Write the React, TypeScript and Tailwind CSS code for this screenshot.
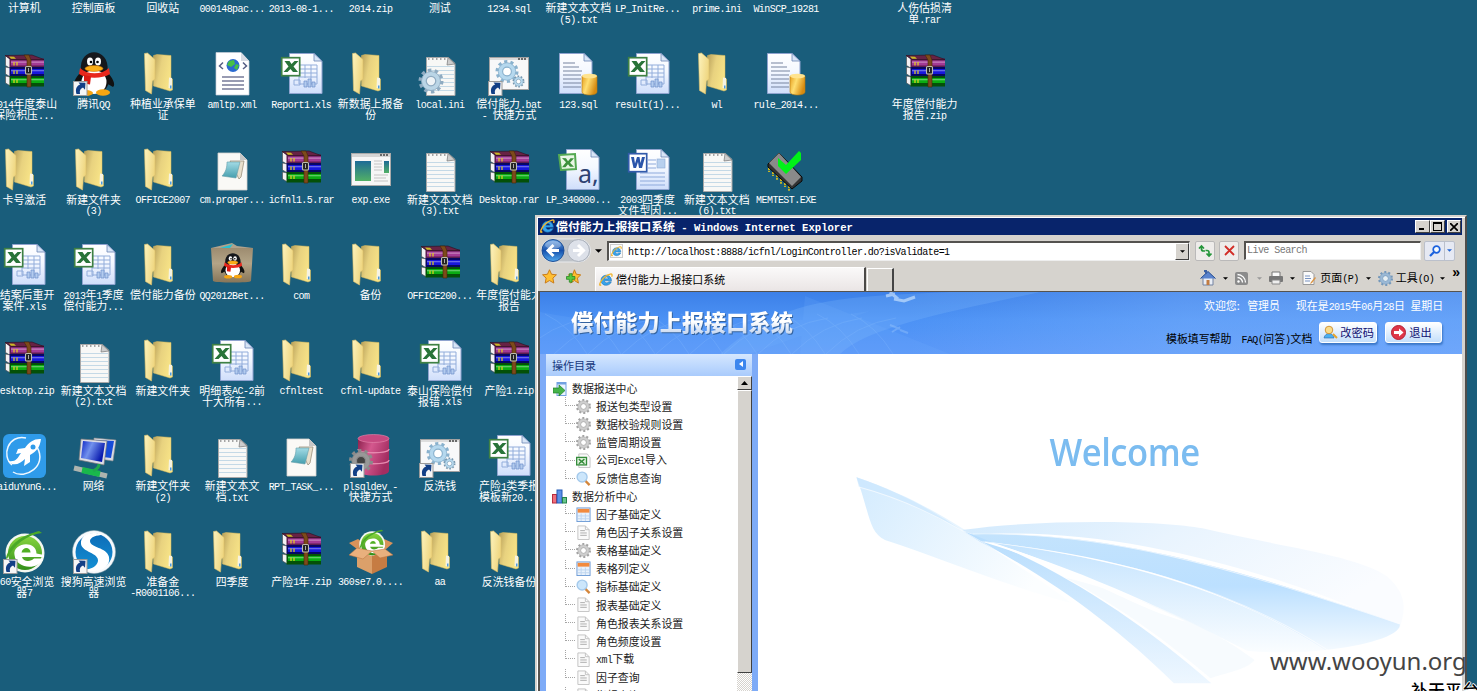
import React from "react";

type Kind =
  | "none" | "rar" | "qq" | "folder" | "xml" | "xls" | "ini" | "bat" | "batlink" | "sql" | "txt" | "prop"
  | "exe" | "csv" | "doc" | "mem" | "qqbox" | "baidu" | "net" | "plsql" | "se" | "sogou" | "sebox";

/* Mixed text: half-width Latin runs beside full-width Han characters. */
function T({ children }: { children: string }) {
  return (
    <>
      {children.split(/([\x20-\x7e]+)/).map((s, i) =>
        i % 2 ? (
          <span key={i} className="whitespace-pre font-['Liberation_Mono',monospace] text-[0.917em] tracking-[-0.055em]">{s}</span>
        ) : (
          <React.Fragment key={i}>{s}</React.Fragment>
        )
      )}
    </>
  );
}

function Gear({ cx, cy, r, fill, stroke, hole = "#fff" }: { cx: number; cy: number; r: number; fill: string; stroke: string; hole?: string }) {
  const c = 2 * Math.PI * r * 0.85;
  return (
    <g>
      <circle cx={cx} cy={cy} r={r * 0.85} fill="none" stroke={stroke} strokeWidth={r * 0.3} strokeDasharray={`${c / 20} ${c / 20}`} />
      <circle cx={cx} cy={cy} r={r * 0.76} fill={fill} stroke={stroke} strokeWidth={r * 0.07} />
      <circle cx={cx} cy={cy} r={r * 0.38} fill={hole} stroke={stroke} strokeWidth={r * 0.1} />
    </g>
  );
}

function Shortcut() {
  return (
    <g>
      <rect x="1.5" y="29.5" width="13.5" height="14" fill="#f6f6f6" stroke="#9a9a9a" />
      <path d="M4.500 42c-1.500-5 .3-8.500 3.700-9.500L6.500 30.500l7 .3-.5 7-2-2.200c-2.500.9-3.700 3-3 6.400z" fill="#123f86" />
    </g>
  );
}

function Penguin() {
  return (
    <g>
      <path d="M9 20C3 26 0 33 3 35l7-4zM35 20c6 6 9 13 6 15l-7-4z" fill="#111" />
      <ellipse cx="22" cy="28" rx="15" ry="14" fill="#111" />
      <ellipse cx="22" cy="30" rx="12.500" ry="12" fill="#fff" />
      <path d="M9 19C6-6 38-6 35.500 19z" fill="#16181c" />
      <ellipse cx="18" cy="9.500" rx="3" ry="4" fill="#fff" /><ellipse cx="26" cy="9.500" rx="3" ry="4" fill="#fff" />
      <circle cx="19" cy="10" r="1.300" /><circle cx="25.500" cy="10" r="1.300" />
      <path d="M8 16c7 7 22 7 29 0l1 6c-8 5-23 5-31 0z" fill="#e8281c" />
      <path d="M12 23l7 1.500-1 8-6-1z" fill="#d91a12" />
      <ellipse cx="22" cy="16.500" rx="9" ry="3" fill="#fbae17" stroke="#c86b00" strokeWidth=".5" />
      <ellipse cx="14" cy="41" rx="7" ry="3" fill="#f7a511" /><ellipse cx="31" cy="40.500" rx="7" ry="3.200" fill="#f7a511" />
    </g>
  );
}

function Page({ x = 10 }: { x?: number }) {
  return (
    <g transform={`translate(${x} 0)`}>
      <path d="M.5 1.500h24.500L33 9v32.500H.5z" fill="url(#paper)" stroke="#8fa3cf" strokeWidth="1" />
      <path d="M25 1.500V9h8z" fill="#d8e5f6" stroke="#6c87b5" strokeWidth=".8" />
    </g>
  );
}

function Pad() {
  return (
    <g>
      <path d="M8.500 5.500h22L37 11.500V43.500H8.500z" fill="#f8f8f6" stroke="#a8a8a8" />
      <path d="M30 5.500l-1 7.500 8-1z" fill="#cdcdcd" stroke="#777" strokeWidth=".7" />
      <path d="M10 7h19" stroke="#a5a5a5" strokeWidth="2" strokeDasharray="1.500 2.500" />
      <path d="M9 14.500h27M9 18.500h27M9 22.500h27M9 26.500h27M9 30.500h27M9 34.500h27M9 38.500h27" stroke="#c4d9e6" />
    </g>
  );
}

function ELogo() {
  return (
    <g>
      <circle cx="23" cy="23" r="19.500" fill="#f4f8f0" />
      <circle cx="23" cy="23" r="17" fill="url(#green)" />
      <path d="M12.500 25C10 13 34 9 34.500 23.500L42 25V27H20c1 5 9 5 12 1.500h9C36 41 14 39 12.500 25z" fill="#fff" />
      <path d="M19.500 22.500h9c0-6-8-6-9 0z" fill="#51af24" />
      <path d="M4 28C8 12 22 5 37 1l3 2C25 5 12 14 5 29z" fill="#4ba928" />
    </g>
  );
}

function Icon({ kind }: { kind: Kind }) {
  let body: React.ReactNode = null;
  switch (kind) {
    case "folder":
      body = (
        <g>
          <path d="M12.500 3.500L16 2.500l14 1V26l1.500 1v11L29 39 12.500 34z" fill="url(#folderBack)" stroke="#d8bb5d" strokeWidth=".5" />
          <path d="M3.500 1.500l3-.5L14 7.500V27l-2.500 2-1 13L4.500 38.500z" fill="url(#folderFront)" stroke="#dbc06a" strokeWidth=".6" />
          <path d="M28 25.500l3 .5v10.500l-3.500-.5z" fill="#f6f3e2" /><path d="M29 33.500h1.500v3H29z" fill="#4c9be0" />
        </g>
      );
      break;
    case "rar":
      body = (
        <g>
          {[["#a33a95", "#5d1c50", 3.5], ["#1717dc", "#070763", 15], ["#0aac12", "#045008", 24]].map(([a, b, y], i) => (
            <g key={i}>
              <path d={`M3.500 ${y}l5 ${i ? 1 : 4}v9l-5-3z`} fill="#f3f1f3" stroke="#444" strokeWidth=".6" />
              <rect x="7.500" y={Number(y) + (i ? 0 : 3)} width="34.500" height={i ? 10.5 : 9} fill={String(b)} />
              <rect x="9" y={Number(y) + (i ? 2 : 5)} width="33" height="5" fill={String(a)} />
              <rect x="9" y={Number(y) + (i ? 3 : 6)} width="33" height="1.300" fill="#fff" opacity=".35" />
              <path d={`M12 ${Number(y) + (i ? 3.5 : 6.5)}v3.500m3-3.500v3.500`} stroke="#e6d21b" strokeWidth="1.200" />
            </g>
          ))}
          <path d="M3 3.500l27-.5 12 4.500H9z" fill="#672244" stroke="#2c0e1d" strokeWidth=".6" />
          <path d="M7 4.500l5 .2 2 2H9z" fill="#c9ba25" />
          <path d="M22 3h5l2 5v27h-4V8z" fill="#7d4a1b" stroke="#462608" strokeWidth=".6" />
          <rect x="23.500" y="14.500" width="6" height="7.500" rx="1" fill="#222" stroke="#bdbdb0" strokeWidth="1.100" /><path d="M26.500 16v4" stroke="#aaa" />
        </g>
      );
      break;
    case "qq":
      body = <g><Penguin /><Shortcut /></g>;
      break;
    case "xml":
      body = (
        <g>
          <path d="M6 .5h25L39 9v34H6z" fill="#fff" stroke="#c7cdd8" strokeWidth=".7" /><path d="M31 .5V9h8z" fill="#d7dbe3" />
          <circle cx="23" cy="13.500" r="6.500" fill="#2b6ad0" /><path d="M19 9l5-1 1 4-4 3-4-2zM26 12l3 1-2 5-3-2z" fill="#46c046" />
          <path d="M13 10.500L9.500 14l3.500 3M33 10.500l3.500 3.500L33 17" fill="none" stroke="#565f86" strokeWidth="1.500" />
          <path d="M12 25h22M12 29h22M12 33h22M12 37h22" stroke="#777b99" strokeWidth="1.400" />
        </g>
      );
      break;
    case "xls":
      body = (
        <g>
          <Page />
          <path d="M20 13h18v19H20zM20 17h18M20 21h18M20 25h18M26 13v13M32 13v19M15 28h6v5h-6z" fill="none" stroke="#92addb" />
          <path d="M25 35v-6h3v6zm4 0v-8h3v8zm4 0v-5h3v5z" fill="#b3cbee" stroke="#6e91ca" strokeWidth=".7" />
          <rect x="2.700" y="5.700" width="18" height="18" fill="#fff" stroke="#3f8144" strokeWidth="1.700" />
          <path d="M5.500 9h5l2 3 3-3h4l-5 5.500 4.500 5.500h-5l-2.500-3-3 3h-4l5-5.500z" fill="#297439" />
        </g>
      );
      break;
    case "csv":
      body = (
        <g>
          <Page /><path d="M3 7l16-1 1 15-15 1z" fill="#e9f7e5" stroke="#54a952" strokeWidth="2" />
          <path d="M6 10l4 .3 2 3 2.500-3H18l-4 4.500 4 4h-4l-2-2.500-2.500 3H6l4-5z" fill="#3d913c" />
          <text x="22" y="35" fontFamily="Noto Sans" fontSize="25" fill="#2d4272">a,</text>
        </g>
      );
      break;
    case "doc":
      body = (
        <g>
          <Page /><path d="M22 12h8M22 16h8M22 20h8M14 25h25M14 29h25M14 33h25M14 37h25" stroke="#8eaadb" strokeWidth="1.200" />
          <rect x="31" y="11" width="8" height="9" fill="#b8d0ee" stroke="#8ba9d4" strokeWidth=".6" />
          <rect x="2.700" y="5.700" width="18" height="18" fill="#fff" stroke="#335bab" strokeWidth="1.700" />
          <path d="M5 9l2.500 11h2.500l2-6 1 6h3L19 9h-3l-1.500 6L13.500 9h-2.500L9 15.500 8 9z" fill="#2b55aa" />
        </g>
      );
      break;
    case "txt":
      body = <Pad />;
      break;
    case "ini":
      body = <g><Pad /><Gear cx={13} cy={29} r={12.5} fill="#bad5e6" stroke="#8fabc1" hole="#eef3f6" /></g>;
      break;
    case "bat":
    case "batlink":
      body = (
        <g>
          <rect x="2.500" y="5.500" width="39" height="32" fill="#f8f8f9" stroke="#a1a1a1" /><path d="M3 7h38" stroke="#ddd" strokeWidth="2" /><path d="M31 7h8" stroke="#444" strokeWidth="1.300" strokeDasharray="2 1" />
          <Gear cx={20} cy={19.500} r={11.500} fill="#b5d8ee" stroke="#89b1cd" /><Gear cx={31.500} cy={29.500} r={6} fill="#b5d8ee" stroke="#7798b0" />
          <Shortcut />
        </g>
      );
      break;
    case "sql":
      body = (
        <g>
          <Page x={3} /><path d="M7 11h12M7 15h16M7 19h19M7 23h18M7 27h18M7 31h18M7 35h18" stroke="#7784a0" strokeWidth="1.200" />
          <path d="M26 24v16c0 4 15 4 15 0V24z" fill="url(#gold)" stroke="#b67b11" strokeWidth=".6" /><ellipse cx="33.500" cy="24" rx="7.500" ry="2.300" fill="#ffe38e" />
        </g>
      );
      break;
    case "prop":
      body = (
        <g>
          <path d="M8 5h22l7 7v30H8z" fill="#faf9f6" stroke="#d5d3cf" strokeWidth=".8" /><path d="M30 5v7h7z" fill="#c6c6c6" />
          <path d="M20 13h14l-3 16-2 2z" fill="#e8dfcc" stroke="#9a917e" strokeWidth=".8" /><path d="M17 14h13l-4 16-14-2c4-4 5-9 5-14z" fill="url(#teal)" stroke="#659eaa" strokeWidth=".6" />
        </g>
      );
      break;
    case "exe":
      body = (
        <g>
          <rect x="2.500" y="5.500" width="39" height="32" fill="#f6f6f6" stroke="#aaa" /><path d="M3 7.500h38" stroke="#d5d5d5" strokeWidth="3" /><path d="M31 7h8" stroke="#444" strokeWidth="1.300" strokeDasharray="2 1" />
          <rect x="6" y="13" width="16" height="20" fill="url(#screen)" /><rect x="35" y="13" width="5" height="12" fill="url(#screen)" />
          <path d="M25 13h8M25 16h8M25 19h8M25 22h8M25 27h14M25 30h12M25 33h14" stroke="#c4c4c4" />
        </g>
      );
      break;
    case "mem":
      body = (
        <g>
          <path d="M5 20v4m4 0v4m4-1v5m4-1v5m4-1v4m4-1v5" stroke="#c8b425" strokeWidth="2" strokeDasharray="2 .7" />
          <path d="M4 16L15 5l23 24v4L28 41 4 19z" fill="#333" stroke="#080808" /><path d="M5 15L15 5l22 24-9 9z" fill="#8a8a8a" />
          <path d="M14 10l8 7L35 3l2 2v7L22 26l-8-8z" fill="#00f218" />
        </g>
      );
      break;
    case "qqbox":
      body = (
        <g>
          <path d="M1 5l21-5 5 3 16 2-5 3z" fill="#b0a28c" /><path d="M10 5l13-4-3 4 7 1z" fill="#29c0d0" />
          <path d="M1 5h42l-2 33c0 2-37 2-38 0z" fill="url(#box)" /><g transform="translate(10 10) scale(.58)"><Penguin /></g>
        </g>
      );
      break;
    case "baidu":
      body = (
        <g>
          <rect x="1" width="43" height="44" rx="6" fill="#2f9bea" /><path d="M24 4C6 0-1 22 10 31m25-18c11 19-12 33-24 25" fill="none" stroke="#eff8ff" strokeWidth="1.500" />
          <path d="M39 5c-7-.5-12 3-16 9l-7 1-2 5 5-1c-4 6-5 9-13 8 5 6 12 3 17-2l-1 7 6-4v-7c7-4 10-8 11-16z" fill="#fff" /><circle cx="31" cy="13" r="2.500" fill="#2f9bea" />
        </g>
      );
      break;
    case "net":
      body = (
        <g>
          <path d="M22 4l22 2-3 21-20-3z" fill="#d8dae3" stroke="#888" strokeWidth=".6" /><path d="M24 6l18 1-3 17-16-2z" fill="#164bd8" />
          <path d="M9 5l26 2-3 24-25-5z" fill="#dddde5" stroke="#777" strokeWidth=".7" /><path d="M11 7l22 2-3 19-21-4z" fill="url(#monitor)" />
          <path d="M2 34l33 8" stroke="#aeb4af" strokeWidth="5" /><path d="M10 36l18 4" stroke="#19b84b" strokeWidth="6" /><path d="M27 30c0 5-3 5-6 7" fill="none" stroke="#1ea84b" strokeWidth="3" />
        </g>
      );
      break;
    case "plsql":
      body = (
        <g>
          <path d="M9 4v33c0 6 31 6 31 0V4z" fill="url(#pink)" /><ellipse cx="24.500" cy="4.500" rx="15.500" ry="4" fill="#c64980" stroke="#e58aae" strokeWidth=".6" />
          <path d="M9 15c0 5 31 5 31 0M9 26c0 5 31 5 31 0" fill="none" stroke="#e689af" strokeWidth="1.300" /><Gear cx={12} cy={27} r={12} fill="#989898" stroke="#8a8a8a" hole="#444" /><Shortcut />
        </g>
      );
      break;
    case "se":
      body = <g><ELogo /><Shortcut /></g>;
      break;
    case "sogou":
      body = (
        <g>
          <circle cx="22" cy="22" r="21.500" fill="#f7fafc" stroke="#97abb5" strokeWidth=".5" /><circle cx="22" cy="22" r="18.500" fill="url(#blue)" />
          <path d="M31 5C19 0 8 5 9 14c1 8 18 9 17 17-1 6-8 8-13 9 15 4 26-3 24-13C35 17 18 18 18 11c0-4 7-6 13-6z" fill="#fff" /><Shortcut />
        </g>
      );
      break;
    case "sebox":
      body = (
        <g>
          <path d="M9 9L0 13l8 6 15 3 13-2 8-7-9-4-12 10z" fill="#d8925a" /><g transform="translate(8 -1) scale(.66)"><ELogo /></g>
          <path d="M8 21l15 5v18L8 37z" fill="#dba06a" /><path d="M23 26l15-5v16l-15 7z" fill="#c67c43" /><path d="M8 18L0 25l14 4 9-8 8 7 13-3-8-6-13 2z" fill="#e9b07d" stroke="#ba713c" strokeWidth=".5" />
        </g>
      );
      break;
  }
  return <svg className="size-11 shrink-0 overflow-visible" viewBox="0 0 44 44">{body}</svg>;
}

type Item = [Kind, string, string?] | null;
const items: Item[] = [
  ["none", "计算机"], ["none", "控制面板"], ["none", "回收站"], ["none", "000148pac..."], ["none", "2013-08-1..."], ["none", "2014.zip"], ["none", "测试"], ["none", "1234.sql"], ["none", "新建文本文档", "(5).txt"], ["none", "LP_InitRe..."], ["none", "prime.ini"], ["none", "WinSCP_19281"], null, ["none", "人伤估损清", "单.rar"],
  ["rar", "2014年度泰山", "保险积压..."], ["qq", "腾讯QQ"], ["folder", "种植业承保单", "证"], ["xml", "amltp.xml"], ["xls", "Report1.xls"], ["folder", "新数据上报备", "份"], ["ini", "local.ini"], ["bat", "偿付能力.bat", "- 快捷方式"], ["sql", "123.sql"], ["xls", "result(1)..."], ["folder", "wl"], ["sql", "rule_2014..."], null, ["rar", "年度偿付能力", "报告.zip"],
  ["folder", "卡号激活"], ["folder", "新建文件夹", "(3)"], ["folder", "OFFICE2007"], ["prop", "cm.proper..."], ["rar", "icfnl1.5.rar"], ["exe", "exp.exe"], ["txt", "新建文本文档", "(3).txt"], ["rar", "Desktop.rar"], ["csv", "LP_340000..."], ["doc", "2003四季度", "文件型因..."], ["txt", "新建文本文档", "(6).txt"], ["mem", "MEMTEST.EXE"], null, null,
  ["xls", " 结案后重开", "案件.xls"], ["xls", "2013年1季度", "偿付能力..."], ["folder", "偿付能力备份"], ["qqbox", "QQ2012Bet..."], ["folder", "com"], ["folder", "备份"], ["rar", "OFFICE200..."], ["folder", "年度偿付能力", "报告"], null, null, null, null, null, null,
  ["rar", "Desktop.zip"], ["txt", "新建文本文档", "(2).txt"], ["folder", "新建文件夹"], ["xls", "明细表AC-2前", "十大所有..."], ["folder", "cfnltest"], ["folder", "cfnl-update"], ["xls", "泰山保险偿付", "报错.xls"], ["rar", "产险1.zip"], null, null, null, null, null, null,
  ["baidu", "BaiduYunG..."], ["net", "网络"], ["folder", "新建文件夹", "(2)"], ["txt", "新建文本文", "档.txt"], ["prop", "RPT_TASK_..."], ["plsql", "plsqldev -", "快捷方式"], ["batlink", "反洗钱"], ["xls", "产险1类季报", "模板新20..."], null, null, null, null, null, null,
  ["se", "360安全浏览", "器7"], ["sogou", "搜狗高速浏览", "器"], ["folder", "准备金", "-R0001106..."], ["folder", "四季度"], ["rar", "产险1年.zip"], ["sebox", "360se7.0...."], ["folder", "aa"], ["folder", "反洗钱备份"], null, null, null, null, null, null,
];

type TreeIcon = "gear" | "xl" | "find" | "table" | "page";
const group1: [TreeIcon, string][] = [["gear", "报送包类型设置"], ["gear", "数据校验规则设置"], ["gear", "监管周期设置"], ["xl", "公司Excel导入"], ["find", "反馈信息查询"]];
const group2: [TreeIcon, string][] = [["table", "因子基础定义"], ["page", "角色因子关系设置"], ["gear", "表格基础定义"], ["table", "表格列定义"], ["find", "指标基础定义"], ["page", "报表基础定义"], ["page", "角色报表关系设置"], ["page", "角色频度设置"], ["page", "xml下载"], ["page", "因子查询"], ["page", "指标查询"]];

function SmallIcon({ kind }: { kind: TreeIcon }) {
  return (
    <svg className="size-[15px] shrink-0" viewBox="0 0 16 16">
      {kind === "gear" && <Gear cx={8} cy={8} r={8} fill="#cfcfcf" stroke="#a2a2a2" />}
      {kind === "page" && <g><path d="M2 1h8l4 4v10.500H2z" fill="#fafafa" stroke="#c2c2c2" /><path d="M10 1v4h4" fill="none" stroke="#c2c2c2" /><path d="M4.500 6h5M4.500 8.500h7M4.500 11h7" stroke="#aaa" /></g>}
      {kind === "xl" && <g><path d="M3 1h9l3 4v10.500H3z" fill="#fafafa" stroke="#c2c2c2" /><rect x=".7" y="4.700" width="10.500" height="8" fill="#e2f2de" stroke="#348c3b" strokeWidth="1.400" /><path d="M3 6.500l6 5M9 6.500l-6 5" stroke="#348c3b" strokeWidth="1.500" /></g>}
      {kind === "find" && <g><path d="M9.500 10l5 5" stroke="#d4863b" strokeWidth="2.500" /><circle cx="6.500" cy="6.500" r="5.300" fill="#cce6fb" stroke="#a5caec" strokeWidth="1.500" /></g>}
      {kind === "table" && <g><rect x="1" y="1" width="14" height="14.500" fill="#e9f2fc" stroke="#6c9bd6" /><rect x="1.800" y="2" width="12.500" height="4" fill="#f28a3d" /><path d="M2 9.500h12M2 12.500h12M5.500 7v8M10 7v8" stroke="#bed5ef" /></g>}
    </svg>
  );
}

function Branch({ icon, label }: { icon: TreeIcon; label: string }) {
  return (
    <div className="flex h-[18.2px] shrink-0 items-center pl-[19px]">
      <div className="h-full w-[11px] shrink-0"><div className="h-[9px] w-[10px] border-b border-l border-dotted border-[#a5a5a5]" /></div>
      <SmallIcon kind={icon} />
      <span className="ml-[5px] whitespace-nowrap"><T>{label}</T></span>
    </div>
  );
}

function IE({ className }: { className: string }) {
  return (
    <svg className={className} viewBox="0 0 16 16">
      <path d="M2.300 9C1.700 1 14-.2 14.300 8.900H6.300c.4 3 3.800 2.800 4.700 1.200h3.100C12.300 15.500 3 15.600 2.300 9zm4-2.300h4.400c-.2-2.700-4-2.600-4.400 0z" fill="#36a3ec" stroke="#1767ac" strokeWidth=".6" />
      <path d="M2.500 13.500C-2 17 2.500 4 13 1.200c2.500-.6 2 1.800 1.500 3" fill="none" stroke="#f0b52d" strokeWidth="1.500" />
    </svg>
  );
}

function Down({ className = "" }: { className?: string }) {
  return <svg className={`h-[3px] w-[5px] shrink-0 ${className}`} viewBox="0 0 6 3"><path d="M0 0h6L3 3z" fill="currentColor" /></svg>;
}

function Banner() {
  return (
    <svg className="absolute inset-0 size-full" viewBox="0 0 922 62" preserveAspectRatio="none">
      <rect width="922" height="62" fill="url(#banner)" />
      <rect width="922" height="62" fill="url(#bannerRight)" />
      <g fill="none" stroke="#a5cfff" opacity=".18">
        {[0, 1, 2, 3, 4, 5, 6, 7, 8, 9].map((n) => <path key={n} d={`M${n * 34 - 20} 62q30-30 70-36M${n * 34 + 5} 22q25 12 42 40`} />)}
      </g>
      <path d="M180 62C240 8 290 5 410 0h90C410 20 330 34 300 62z" fill="#91c6ff" opacity=".2" />
      <path d="M265 4L410 62H260zM0 20Q140 48 330 19L210 62H0z" fill="#79b7ff" opacity=".15" />
      <path d="M346 4l9-2M350 0l8 7M354 7l10 2 11-4" fill="none" stroke="#d9edff" strokeWidth="3" opacity=".6" />
      <path d="M350 33l10 4m-8 3l8-5m0 3l8 3" stroke="#b2d7ff" strokeWidth="2" opacity=".3" />
    </svg>
  );
}

function Swoosh() {
  return (
    <svg className="absolute inset-0 size-full" viewBox="-202 -138 1730 1011" preserveAspectRatio="none">
      <path d="M40 232C180 290 285 370 350 425S500 545 570 610C400 555 260 480 110 420C70 395 75 350 40 232z" fill="url(#sw1)" />
      <path d="M40 232C150 278 245 345 300 392C230 345 120 282 46 261z" fill="#c9e6fd" opacity=".6" />
      <path d="M298 390C500 355 800 362 890 385C1080 440 1270 465 1345 530C1400 590 1385 640 1375 685C1150 550 700 370 330 405z" fill="url(#sw2)" />
      <path d="M320 402C640 395 930 485 1375 672C1380 705 1290 738 1190 750C950 560 690 470 355 425z" fill="url(#sw3)" />
      <path d="M355 425C660 470 960 565 1190 750C1110 762 1040 757 1000 752C860 665 620 520 380 432z" fill="url(#sw4)" />
      <path d="M545 530C740 590 900 670 1018 780C1000 810 940 820 910 835C810 730 680 610 520 512z" fill="#f1f8fe" opacity=".6" />
      <path d="M300 392C520 488 730 655 912 850H820C680 680 510 530 345 426z" fill="url(#sw5)" />
      <path d="M46 261C150 295 240 350 300 392S470 508 570 610M325 402C650 395 940 495 1375 672M355 425C680 475 940 550 1198 750" fill="none" stroke="#fff" strokeWidth="2.500" opacity=".65" />
      <path d="M345 424C620 525 710 620 850 665C720 590 540 495 380 430z" fill="#fff" />
    </svg>
  );
}

function Defs() {
  const g = (id: string, a: string, b: string, v = false, mid?: string) => (
    <linearGradient id={id} x1="0" y1="0" x2={v ? 0 : 1} y2={v ? 1 : 0.4}>
      <stop stopColor={a} />{mid && <stop offset=".45" stopColor={mid} />}<stop offset="1" stopColor={b} />
    </linearGradient>
  );
  return (
    <svg className="absolute size-0">
      <defs>
        <linearGradient id="bannerRight">
          <stop offset=".4" stopColor="#8cbcff" stopOpacity="0" /><stop offset=".7" stopColor="#8cbcff" stopOpacity=".35" /><stop offset="1" stopColor="#8cbcff" stopOpacity=".4" />
        </linearGradient>
        {g("folderBack", "#b8a05a", "#f8e487", false, "#e8d27f")}{g("folderFront", "#fdf3bd", "#efd680")}
        {g("paper", "#fff", "#cfdefb", true, "#f4f8ff")}{g("gold", "#e59d1c", "#d68a10", false, "#ffdf72")}
        {g("teal", "#a3dbe5", "#459ead", true)}{g("screen", "#1d6b96", "#52b066", true)}{g("box", "#9d8c70", "#887659", true, "#b3a487")}
        {g("monitor", "#0b25c6", "#0718ad", false, "#7291ed")}{g("pink", "#8a204c", "#a32d61", false, "#d4588e")}
        {g("green", "#87d43e", "#328f1a", true)}{g("blue", "#0c6cb7", "#1490d4", true)}{g("banner", "#3c80e8", "#5b98f8", true, "#4c92f5")}
        {g("sw1", "#d3ebfe", "#fcfeff")}{g("sw2", "#d3eafd", "#fafcff", false, "#e9f4fe")}{g("sw3", "#c3e3fd", "#f4faff", true, "#bce0ff")}
        {g("sw4", "#c3e3fe", "#fafdff", true)}{g("sw5", "#b5dcfd", "#eef7ff", true)}
      </defs>
    </svg>
  );
}

const bevel = "border border-t-white border-l-white border-r-[#404040] border-b-[#404040] bg-[#d6d3ce]";

function BrowserWindow() {
  return (
    <div className="absolute left-[535px] top-[215px] flex h-[500px] w-[932px] flex-col border-2 border-[#d6d3ce] border-r-[#4f4d4a] bg-[#d6d3ce] pl-px pr-[3px] pt-px shadow-[inset_1px_1px_0_#fff]">
      <div className="flex h-[17px] shrink-0 items-center bg-[#08246b] pl-[2px] pr-px text-[12.1px] font-bold text-white">
        <IE className="mr-px size-[15px]" />
        <div className="flex-1 whitespace-nowrap text-[11.900px] leading-none">偿付能力上报接口系统<span className="whitespace-pre font-['Liberation_Mono',monospace] text-[10.600px]"> - Windows Internet Explorer</span></div>
        <div className={`flex h-[13px] w-[15px] items-end pb-[2px] pl-[3px] ${bevel}`}><i className="h-[2px] w-[5px] bg-black" /></div>
        <div className={`flex h-[13px] w-[15px] items-center justify-center ${bevel}`}><i className="h-[9px] w-[9px] border border-t-2 border-black" /></div>
        <div className={`ml-[2px] flex h-[13px] w-[14px] items-center justify-center ${bevel}`}><svg className="size-[8px]" viewBox="0 0 8 8"><path d="M0 0l8 8M8 0L0 8" stroke="#000" strokeWidth="1.700" /></svg></div>
      </div>

      <div className="flex h-[31px] shrink-0 items-center pl-[3px] pr-[7px]">
        <svg className="h-[25px] w-[50px] shrink-0" viewBox="0 0 50 25">
          <rect x=".5" y="1" width="49" height="23" rx="11.500" fill="#bfc3c8" stroke="#e8eaed" />
          <circle cx="12" cy="12.500" r="11" fill="url(#nav)" stroke="#1e4f96" /><circle cx="37.500" cy="12.500" r="11" fill="#dde1e9" stroke="#aab0ba" />
          <ellipse cx="12" cy="7" rx="8" ry="4" fill="#fff" opacity=".3" />
          <path d="M12.500 7L7 12.500l5.500 5.500M7.500 12.500H18M37 7l5.500 5.500L37 18M42 12.500H32" fill="none" stroke="#fff" strokeWidth="3" />
          <defs><linearGradient id="nav" x2="0" y2="1"><stop stopColor="#72a9e6" /><stop offset=".5" stopColor="#1550ac" /><stop offset="1" stopColor="#52a9ee" /></linearGradient></defs>
        </svg>
        <Down className="ml-[4px] h-[4px] w-[7px]" />
        <div className="ml-[5px] flex h-[20px] w-[583px] shrink-0 items-center border border-t-2 border-l-2 border-[#eee] border-t-[#54524f] border-l-[#54524f] bg-white pl-[1px] text-[10.920px]">
          <span className="mr-[5px] flex h-[14px] w-[13px] items-center border border-[#ccc] bg-[#fafafa]"><IE className="size-[11px]" /></span>
          <div className="flex-1 whitespace-nowrap tracking-[0.02px]"><T>http://localhost:8888/icfnl/LoginController.do?isValidate=1</T></div>
          <div className={`flex h-[17px] w-[14px] items-center justify-center ${bevel}`}><Down /></div>
        </div>
        <div className="ml-[5px] flex size-[20px] shrink-0 items-center justify-center rounded-[2px] border border-[#bab9b9] bg-[#eeecea]"><svg className="size-[14px]" viewBox="0 0 14 14"><path d="M3.500 2v3a2 2 0 002 2H7M1 4.500L3.500 2 6 4.500" fill="none" stroke="#25963b" strokeWidth="1.700" /><path d="M7.500 6.500H9a2 2 0 012 2V12M8.500 9.500L11 12l2.500-2.500" fill="none" stroke="#25963b" strokeWidth="1.700" /></svg></div>
        <div className="ml-[4px] flex size-[20px] shrink-0 items-center justify-center rounded-[2px] border border-[#bab9b9] bg-[#eeecea]"><svg className="size-[11px]" viewBox="0 0 11 11"><path d="M1 1l9 9M10 1l-9 9" stroke="#d22d27" strokeWidth="1.800" /></svg></div>
        <div className="ml-[5px] flex h-[19px] w-[177px] shrink-0 items-center border border-t-2 border-l-2 border-[#eee] border-t-[#54524f] border-l-[#54524f] bg-white pl-[1px] text-[10.920px] leading-none text-[#777]"><T>Live Search</T></div>
        <div className="ml-auto flex h-[20px] w-[31px] shrink-0 items-center rounded-[2px] border border-[#bbc0cb] bg-[#e6e9f3]">
          <svg className="ml-[4px] size-[12px]" viewBox="0 0 12 12"><circle cx="7.500" cy="4.500" r="3.300" fill="#f8fcff" stroke="#1c62de" strokeWidth="1.700" /><path d="M5 7l-4 4" stroke="#1c62de" strokeWidth="2.200" /></svg>
          <div className="ml-[3px] flex h-full flex-1 items-center justify-center border-l border-[#bbc0cb] text-[#2466d4]"><Down /></div>
        </div>
      </div>

      <div className="flex h-[25px] shrink-0 items-end">
        <svg className="mb-[7px] ml-[4px] size-[15px]" viewBox="0 0 16 16"><path d="M8 .8l2.200 4.800 5.200.6-3.800 3.500 1 5.300L8 12.300 3.400 15l1-5.300L.6 6.200l5.200-.6z" fill="#ffbf32" stroke="#c87813" /></svg>
        <svg className="mb-[7px] ml-[9px] size-[15px]" viewBox="0 0 16 16"><path d="M9 .8l2 4.800 4.700.6-3.500 3.500 1 5.300L9 12.300 5 15l1-5.300L2.600 6.200l4.600-.6z" fill="#ffbf32" stroke="#c87813" /><path d="M3.500 5h3v3h3v3h-3v3h-3v-3h-3V8h3z" fill="#57c940" stroke="#268021" strokeWidth=".8" /></svg>
        <div className="ml-[14px] flex h-[24px] w-[271px] items-center border-l border-r-2 border-t border-white border-r-[#4b4947] bg-gradient-to-b from-[#faf9f9] to-[#eae5e5] pl-[3px] text-[10.920px] leading-none"><IE className="mr-[3px] size-[14px]" />偿付能力上报接口系统</div>
        <div className="ml-px h-[23px] w-[27px] border border-r-2 border-b-0 border-white border-r-[#444]" />
        <div className="ml-auto flex h-[25px] items-center pb-px text-[11px]">
          <svg className="size-[16px]" viewBox="0 0 16 16"><path d="M3 8v7h10V8" fill="#e9edf5" stroke="#7382a0" /><path d="M.5 8.500L8 1.500l7.500 7" fill="#5a83cd" stroke="#244c91" /><path d="M4 1h2v3" stroke="#3c61a4" strokeWidth="2" /><path d="M6.500 10h3v5h-3z" fill="#c17c43" /></svg>
          <Down className="ml-[7px]" />
          <svg className="ml-[7px] size-[13px]" viewBox="0 0 13 13"><rect width="13" height="13" rx="2" fill="#8b8b8b" /><circle cx="3.500" cy="9.500" r="1.200" fill="#fff" /><path d="M2.500 5.500a5 5 0 015 5M2.500 2.500a8 8 0 018 8" fill="none" stroke="#fff" strokeWidth="1.300" /></svg>
          <Down className="ml-[9px] text-[#999]" />
          <svg className="ml-[7px] size-[14px]" viewBox="0 0 14 14"><path d="M3 1h8v5H3z" fill="#fafafa" stroke="#777" /><rect y="5" width="14" height="6" rx="1" fill="#777" /><path d="M3 9h8v4H3z" fill="#eee" stroke="#888" /></svg>
          <Down className="ml-[7px]" />
          <svg className="ml-[7px] size-[14px]" viewBox="0 0 14 14"><path d="M1 .5h8l3 3v10H1z" fill="#fafafa" stroke="#999" /><path d="M3 5h5M3 7.500h6M3 10h5" stroke="#7893c2" /><path d="M13 6l-4 5-1 2 2-1 4-5z" fill="#dc9442" /></svg>
          <span className="ml-[4px] whitespace-nowrap"><T>页面(P)</T></span><Down className="ml-[7px]" />
          <svg className="ml-[7px] size-[15px]" viewBox="0 0 16 16"><Gear cx={8} cy={8} r={8} fill="#9bb9d6" stroke="#7397ba" hole="#e8f0f4" /></svg>
          <span className="ml-[3px] whitespace-nowrap"><T>工具(O)</T></span><Down className="ml-[6px]" />
          <span className="mr-[2px] ml-[7px] pb-[13px] font-['Liberation_Sans',sans-serif] text-[14px] font-bold leading-none">»</span>
        </div>
      </div>

      <div className="flex min-h-0 flex-1 flex-col border-l-2 border-t border-[#55534f]">
        <header className="relative flex h-[62px] shrink-0 justify-between">
          <Banner />
          <h1 className="relative mt-[17px] ml-[31px] h-[28px] bg-gradient-to-b from-white from-45% to-[#b9cdeb] bg-clip-text text-[22.200px] font-black leading-[25px] text-transparent drop-shadow-[1px_1px_0_#34639f]">偿付能力上报接口系统</h1>
          <div className="relative flex w-[296px] flex-col text-[10.920px]">
            <div className="mt-[7px] flex h-[13px] items-center gap-[16px] whitespace-nowrap pl-[38px] text-white"><span>欢迎您: <span className="ml-[5px]">管理员</span></span><span><T>现在是2015年06月28日 星期日</T></span></div>
            <div className="mt-[10px] flex items-start whitespace-nowrap text-black">
              <span className="mt-[8px] leading-[16px]">模板填写帮助</span><span className="ml-[10px] mt-[8px] leading-[16px]"><T>FAQ(问答)文档</T></span>
              <button className="ml-[7px] flex h-[21px] w-[58px] items-center rounded-[3px] border border-white bg-gradient-to-b from-white to-[#c4dffb] pl-[3px] text-[11.200px] text-[#101070] shadow-[1px_2px_2px_#3c78c8]"><svg className="mr-[2px] size-[15px]" viewBox="0 0 15 15"><path d="M1 13c1-6 9-6 10 0z" fill="#4bb0f0" stroke="#2b66a9" strokeWidth=".6" /><circle cx="6" cy="5" r="3.800" fill="#f9dc8c" stroke="#c8821b" strokeWidth=".8" /><path d="M10 9l4 4" stroke="#e5a42c" strokeWidth="2" /></svg>改密码</button>
              <button className="ml-[8px] flex h-[21px] w-[57px] items-center rounded-[3px] border border-white bg-gradient-to-b from-white to-[#c4dffb] pl-[5px] text-[11.200px] text-[#101070] shadow-[1px_2px_2px_#3c78c8]"><svg className="mr-[3px] size-[15px]" viewBox="0 0 15 15"><circle cx="7.500" cy="7.500" r="7" fill="#de3648" stroke="#b51f32" /><path d="M3 6h5V3.500L12.500 7.500 8 11.500V9H3z" fill="#fff" /></svg>退出</button>
            </div>
          </div>
        </header>
        <div className="flex min-h-0 flex-1">
          <aside className="flex w-[218px] shrink-0 flex-col bg-[#7eabf7] pl-[6px] pr-[6px]">
            <div className="flex h-[22px] shrink-0 items-center justify-between bg-gradient-to-b from-[#d5e7fe] to-[#a9cbfc] pl-[6px] pr-[6px] text-[11px] text-[#173980]">操作目录<span className="mb-[2px] flex size-[11px] items-center justify-center rounded-[2px] bg-[#3c86ee]"><svg className="size-[6px]" viewBox="0 0 6 6"><path d="M5 0v6L1 3z" fill="#fff" /></svg></span></div>
            <div className="flex min-h-0 flex-1 bg-white">
              <nav className="flex min-w-0 flex-1 flex-col overflow-hidden pt-[4px] text-[10.920px] leading-none text-[#222]">
                <div className="flex h-[17px] shrink-0 items-center pl-[7px]"><svg className="mr-[5px] size-[14px]" viewBox="0 0 14 14"><rect x="4" y=".5" width="9" height="13" fill="#eaf4ff" stroke="#73a1e1" /><path d="M4 1.500h9" stroke="#73a1e1" strokeWidth="2" /><path d="M0 6h6V3l6 5.500L6 14v-3H0z" fill="#45b449" stroke="#217f29" strokeWidth=".7" /></svg>数据报送中心</div>
                {group1.map(([i, l]) => <Branch key={l} icon={i} label={l} />)}
                <div className="flex h-[17px] shrink-0 items-center pl-[6px]"><svg className="mr-[5px] size-[15px]" viewBox="0 0 15 14"><rect x=".5" y="5" width="4" height="8.500" fill="#f06f7c" stroke="#b92c3d" /><rect x="5" y=".5" width="5" height="13" fill="#5b90e8" stroke="#225bb7" /><rect x="10.500" y="8" width="4" height="5.500" fill="#68c68c" stroke="#25834a" /></svg>数据分析中心</div>
                {group2.map(([i, l]) => <Branch key={l} icon={i} label={l} />)}
              </nav>
              <div className="flex w-[15px] shrink-0 flex-col bg-[repeating-conic-gradient(#fff_0_25%,#d6d3ce_0_50%)] bg-[length:2px_2px]">
                <div className={`flex h-[14px] shrink-0 items-center justify-center ${bevel}`}><svg className="h-[4px] w-[7px]" viewBox="0 0 7 4"><path d="M0 4h7L3.500 0z" /></svg></div>
                <div className={`h-[283px] shrink-0 ${bevel}`} />
              </div>
            </div>
          </aside>
          <main className="relative flex-1 overflow-hidden bg-white">
            <div className="relative h-[337px]">
              <Swoosh />
              <div className="relative flex justify-center pl-[29px] pt-[71px]"><span className="origin-center scale-x-[0.91] font-['Open_Sans',sans-serif] text-[38px] font-semibold leading-[52px] tracking-[-0.5px] text-[#7bbcf0]">Welcome</span></div>
            </div>
          </main>
        </div>
      </div>
    </div>
  );
}

export default function App() {
  return (
    <div className="relative h-[691px] w-[1477px] overflow-hidden bg-[#195d7b] font-['Noto_Sans_CJK_SC',sans-serif] text-black">
      <Defs />
      <div className="-ml-[10.300px] -mt-[43.600px] grid auto-rows-[95.600px] grid-cols-[repeat(14,69.250px)]">
        {items.map((it, i) => (
          <div key={i} className="flex flex-col items-center">
            {it && (
              <>
                <Icon kind={it[0]} />
                <div className="mt-[2px] flex flex-col items-center whitespace-pre text-[10.920px] leading-none text-white">
                  <div className="flex h-[11px] items-center [&>span]:pt-[4px]"><T>{it[1]}</T></div>
                  {it[2] && <div className="flex h-[11px] items-center [&>span]:pt-[4px]"><T>{it[2]}</T></div>}
                </div>
              </>
            )}
          </div>
        ))}
      </div>
      <BrowserWindow />
      <div className="absolute left-[1270px] top-[645px] whitespace-nowrap font-['Noto_Sans',sans-serif] text-[24px] leading-[32px] text-[#444]">www.wooyun.org</div>
      <div className="absolute left-[1411px] top-[680px] whitespace-nowrap text-[17px] font-medium leading-[20px] [text-shadow:1px_0_#fff,-1px_0_#fff,0_1px_#fff,0_-1px_#fff]">补天平台</div>
    </div>
  );
}
